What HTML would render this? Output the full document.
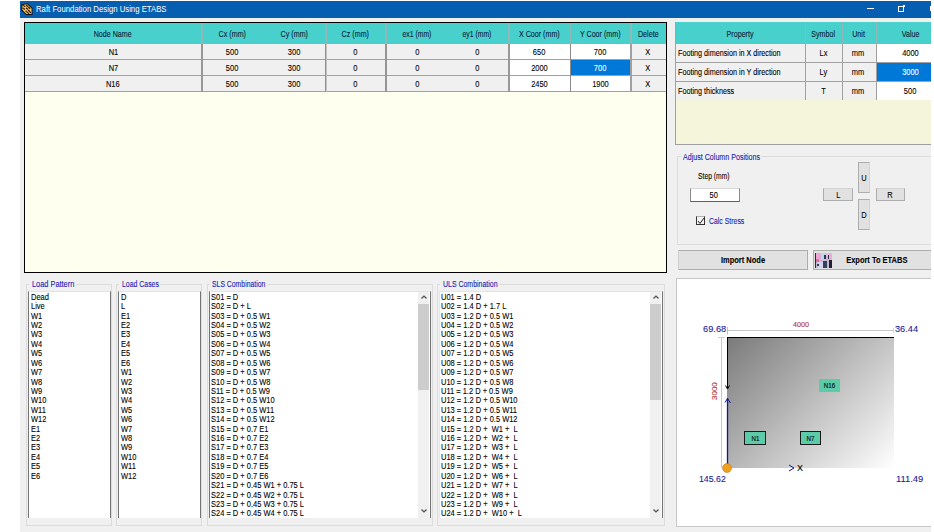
<!DOCTYPE html><html><head><meta charset="utf-8"><style>
*{margin:0;padding:0;box-sizing:border-box}
html,body{width:934px;height:532px;overflow:hidden;background:#fff;font-family:"Liberation Sans",sans-serif;font-size:8px;color:#000}
.ab{position:absolute}
.t{position:absolute;white-space:pre;line-height:1;-webkit-text-stroke:0.1px currentColor}
</style></head><body>
<div class="ab" style="left:20px;top:1px;width:911px;height:531px;background:#f0f0f0"></div><div class="ab" style="left:20px;top:1px;width:911px;height:16.5px;background:#065eb0"></div><svg class="ab" style="left:18px;top:0px" width="18" height="18" viewBox="18 0 18 18">
<polygon points="21.3,4.3 27.6,3.2 32.5,8 32.5,15 26,15 21.3,10.2" fill="#111"/>
<polygon points="22.3,5 27.2,4.2 31.6,8.4 31.6,14 26.4,14 22.3,9.8" fill="#ecc450"/>
<circle cx="23.1" cy="5.4" r="0.75" fill="#2a0a08"/><circle cx="24.6" cy="6.3" r="0.75" fill="#2a0a08"/><circle cx="26.6" cy="5.4" r="0.75" fill="#2a0a08"/><circle cx="27.6" cy="6.3" r="0.75" fill="#2a0a08"/><circle cx="28.8" cy="7.6" r="0.75" fill="#2a0a08"/><circle cx="29.7" cy="8.3" r="0.75" fill="#2a0a08"/><circle cx="23.1" cy="8.3" r="0.75" fill="#2a0a08"/><circle cx="24.3" cy="9.1" r="0.75" fill="#2a0a08"/><circle cx="26.5" cy="8.3" r="0.75" fill="#2a0a08"/><circle cx="27.5" cy="9.1" r="0.75" fill="#2a0a08"/><circle cx="28.7" cy="10.5" r="0.75" fill="#2a0a08"/><circle cx="29.5" cy="11.2" r="0.75" fill="#2a0a08"/><circle cx="26.3" cy="11.2" r="0.75" fill="#2a0a08"/><circle cx="27.3" cy="12.2" r="0.75" fill="#2a0a08"/><circle cx="30.5" cy="12.5" r="0.75" fill="#2a0a08"/><circle cx="28.5" cy="13.3" r="0.75" fill="#2a0a08"/>
</svg><div class="t" style="left:35.75px;top:5.00px;font-size:9px;color:#fff;transform:scaleX(0.862);transform-origin:0 50%;-webkit-text-stroke:0;">Raft Foundation Design Using ETABS</div><div class="ab" style="left:867px;top:8px;width:7px;height:1px;background:#fff"></div><div class="ab" style="left:898px;top:6px;width:6px;height:6px;border:1px solid #fff"></div><div class="ab" style="left:903px;top:5px;width:2px;height:2px;background:#fff"></div><div class="ab" style="left:930px;top:6px;width:1px;height:5px;background:#fff"></div><div class="ab" style="left:24px;top:22px;width:643px;height:251px;border:1px solid #000;background:#fffff0"></div><div class="ab" style="left:25px;top:23px;width:641px;height:21px;background:#48d1cc"></div><div class="ab" style="left:25px;top:44px;width:641px;height:15px;background:#f0f0f0"></div><div class="ab" style="left:25px;top:59px;width:641px;height:1px;background:#a0a0a0"></div><div class="ab" style="left:25px;top:60px;width:641px;height:15px;background:#f0f0f0"></div><div class="ab" style="left:25px;top:75px;width:641px;height:1px;background:#a0a0a0"></div><div class="ab" style="left:25px;top:76px;width:641px;height:15px;background:#f0f0f0"></div><div class="ab" style="left:25px;top:91px;width:641px;height:1px;background:#a0a0a0"></div><div class="ab" style="left:510px;top:44px;width:60px;height:15px;background:#fff"></div><div class="ab" style="left:571px;top:44px;width:59px;height:15px;background:#fff"></div><div class="ab" style="left:510px;top:60px;width:60px;height:15px;background:#fff"></div><div class="ab" style="left:571px;top:60px;width:59px;height:15px;background:#fff"></div><div class="ab" style="left:510px;top:76px;width:60px;height:15px;background:#fff"></div><div class="ab" style="left:571px;top:76px;width:59px;height:15px;background:#fff"></div><div class="ab" style="left:571px;top:60px;width:59px;height:15px;background:#0078d7"></div><div class="ab" style="left:201px;top:23px;width:2px;height:21px;background:#8fb9b7"></div><div class="ab" style="left:201px;top:44px;width:2px;height:48px;background:#989898"></div><div class="ab" style="left:325px;top:23px;width:1px;height:21px;background:#8fb9b7"></div><div class="ab" style="left:325px;top:44px;width:1px;height:48px;background:#909090"></div><div class="ab" style="left:326px;top:23px;width:1px;height:21px;background:#8fb9b7"></div><div class="ab" style="left:326px;top:44px;width:1px;height:48px;background:#c4c4c4"></div><div class="ab" style="left:385px;top:23px;width:2px;height:21px;background:#8fb9b7"></div><div class="ab" style="left:385px;top:44px;width:2px;height:48px;background:#959595"></div><div class="ab" style="left:508px;top:23px;width:2px;height:21px;background:#8fb9b7"></div><div class="ab" style="left:508px;top:44px;width:2px;height:48px;background:#999999"></div><div class="ab" style="left:570px;top:23px;width:1px;height:21px;background:#8fb9b7"></div><div class="ab" style="left:570px;top:44px;width:1px;height:48px;background:#8a8a8a"></div><div class="ab" style="left:630px;top:23px;width:2px;height:21px;background:#8fb9b7"></div><div class="ab" style="left:630px;top:44px;width:2px;height:48px;background:#a0a0a0"></div><div class="t" style="left:90.32px;top:30.25px;font-size:8.5px;color:#0a1a3a;transform:scaleX(0.838);transform-origin:50% 50%;">Node Name</div><div class="t" style="left:215.71px;top:30.25px;font-size:8.5px;color:#0a1a3a;transform:scaleX(0.840);transform-origin:50% 50%;">Cx (mm)</div><div class="t" style="left:277.71px;top:30.25px;font-size:8.5px;color:#0a1a3a;transform:scaleX(0.840);transform-origin:50% 50%;">Cy (mm)</div><div class="t" style="left:338.71px;top:30.25px;font-size:8.5px;color:#0a1a3a;transform:scaleX(0.840);transform-origin:50% 50%;">Cz (mm)</div><div class="t" style="left:399.05px;top:30.25px;font-size:8.5px;color:#0a1a3a;transform:scaleX(0.802);transform-origin:50% 50%;">ex1 (mm)</div><div class="t" style="left:459.05px;top:30.25px;font-size:8.5px;color:#0a1a3a;transform:scaleX(0.802);transform-origin:50% 50%;">ey1 (mm)</div><div class="t" style="left:514.68px;top:30.25px;font-size:8.5px;color:#0a1a3a;transform:scaleX(0.840);transform-origin:50% 50%;">X Coor (mm)</div><div class="t" style="left:575.75px;top:30.25px;font-size:8.5px;color:#0a1a3a;transform:scaleX(0.840);transform-origin:50% 50%;">Y Coor (mm)</div><div class="t" style="left:635.71px;top:30.25px;font-size:8.5px;color:#0a1a3a;transform:scaleX(0.840);transform-origin:50% 50%;">Delete</div><div class="t" style="left:107.56px;top:48.05px;font-size:8.5px;color:#000;transform:scaleX(0.880);transform-origin:50% 50%;">N1</div><div class="t" style="left:224.91px;top:48.05px;font-size:8.5px;color:#000;transform:scaleX(0.880);transform-origin:50% 50%;">500</div><div class="t" style="left:286.91px;top:48.05px;font-size:8.5px;color:#000;transform:scaleX(0.880);transform-origin:50% 50%;">300</div><div class="t" style="left:352.63px;top:48.05px;font-size:8.5px;color:#000;transform:scaleX(0.880);transform-origin:50% 50%;">0</div><div class="t" style="left:414.63px;top:48.05px;font-size:8.5px;color:#000;transform:scaleX(0.880);transform-origin:50% 50%;">0</div><div class="t" style="left:474.63px;top:48.05px;font-size:8.5px;color:#000;transform:scaleX(0.880);transform-origin:50% 50%;">0</div><div class="t" style="left:531.91px;top:48.05px;font-size:8.5px;color:#000;transform:scaleX(0.880);transform-origin:50% 50%;">650</div><div class="t" style="left:592.91px;top:48.05px;font-size:8.5px;color:#000;transform:scaleX(0.880);transform-origin:50% 50%;">700</div><div class="t" style="left:645.16px;top:48.05px;font-size:8.5px;color:#000;transform:scaleX(0.880);transform-origin:50% 50%;">X</div><div class="t" style="left:107.56px;top:64.05px;font-size:8.5px;color:#000;transform:scaleX(0.880);transform-origin:50% 50%;">N7</div><div class="t" style="left:224.91px;top:64.05px;font-size:8.5px;color:#000;transform:scaleX(0.880);transform-origin:50% 50%;">500</div><div class="t" style="left:286.91px;top:64.05px;font-size:8.5px;color:#000;transform:scaleX(0.880);transform-origin:50% 50%;">300</div><div class="t" style="left:352.63px;top:64.05px;font-size:8.5px;color:#000;transform:scaleX(0.880);transform-origin:50% 50%;">0</div><div class="t" style="left:414.63px;top:64.05px;font-size:8.5px;color:#000;transform:scaleX(0.880);transform-origin:50% 50%;">0</div><div class="t" style="left:474.63px;top:64.05px;font-size:8.5px;color:#000;transform:scaleX(0.880);transform-origin:50% 50%;">0</div><div class="t" style="left:529.54px;top:64.05px;font-size:8.5px;color:#000;transform:scaleX(0.880);transform-origin:50% 50%;">2000</div><div class="t" style="left:592.91px;top:64.05px;font-size:8.5px;color:#fff;transform:scaleX(0.880);transform-origin:50% 50%;">700</div><div class="t" style="left:645.16px;top:64.05px;font-size:8.5px;color:#000;transform:scaleX(0.880);transform-origin:50% 50%;">X</div><div class="t" style="left:105.20px;top:80.05px;font-size:8.5px;color:#000;transform:scaleX(0.880);transform-origin:50% 50%;">N16</div><div class="t" style="left:224.91px;top:80.05px;font-size:8.5px;color:#000;transform:scaleX(0.880);transform-origin:50% 50%;">500</div><div class="t" style="left:286.91px;top:80.05px;font-size:8.5px;color:#000;transform:scaleX(0.880);transform-origin:50% 50%;">300</div><div class="t" style="left:352.63px;top:80.05px;font-size:8.5px;color:#000;transform:scaleX(0.880);transform-origin:50% 50%;">0</div><div class="t" style="left:414.63px;top:80.05px;font-size:8.5px;color:#000;transform:scaleX(0.880);transform-origin:50% 50%;">0</div><div class="t" style="left:474.63px;top:80.05px;font-size:8.5px;color:#000;transform:scaleX(0.880);transform-origin:50% 50%;">0</div><div class="t" style="left:529.54px;top:80.05px;font-size:8.5px;color:#000;transform:scaleX(0.880);transform-origin:50% 50%;">2450</div><div class="t" style="left:590.54px;top:80.05px;font-size:8.5px;color:#000;transform:scaleX(0.880);transform-origin:50% 50%;">1900</div><div class="t" style="left:645.16px;top:80.05px;font-size:8.5px;color:#000;transform:scaleX(0.880);transform-origin:50% 50%;">X</div><div class="ab" style="left:675px;top:22px;width:256px;height:123px;background:#f5f5dc;border-left:1px solid #a0a0a0;border-bottom:1px solid #a0a0a0"></div><div class="ab" style="left:676px;top:22px;width:255px;height:22px;background:#48d1cc"></div><div class="ab" style="left:676px;top:44px;width:255px;height:18px;background:#f0f0f0"></div><div class="ab" style="left:877px;top:44px;width:54px;height:18px;background:#fff"></div><div class="ab" style="left:676px;top:63px;width:255px;height:18px;background:#f0f0f0"></div><div class="ab" style="left:877px;top:63px;width:54px;height:18px;background:#fff"></div><div class="ab" style="left:676px;top:82px;width:255px;height:18px;background:#f0f0f0"></div><div class="ab" style="left:877px;top:82px;width:54px;height:18px;background:#fff"></div><div class="ab" style="left:676px;top:62px;width:255px;height:1px;background:#a0a0a0"></div><div class="ab" style="left:676px;top:81px;width:255px;height:1px;background:#a0a0a0"></div><div class="ab" style="left:877px;top:63px;width:54px;height:18px;background:#0078d7"></div><div class="ab" style="left:805px;top:22px;width:1px;height:22px;background:#8fb9b7"></div><div class="ab" style="left:805px;top:44px;width:1px;height:56px;background:#a0a0a0"></div><div class="ab" style="left:842px;top:22px;width:1px;height:22px;background:#8fb9b7"></div><div class="ab" style="left:842px;top:44px;width:1px;height:56px;background:#a0a0a0"></div><div class="ab" style="left:876px;top:22px;width:1px;height:22px;background:#8fb9b7"></div><div class="ab" style="left:876px;top:44px;width:1px;height:56px;background:#a0a0a0"></div><div class="t" style="left:723.94px;top:29.75px;font-size:8.5px;color:#0a1a3a;transform:scaleX(0.840);transform-origin:50% 50%;">Property</div><div class="t" style="left:809.33px;top:29.75px;font-size:8.5px;color:#0a1a3a;transform:scaleX(0.840);transform-origin:50% 50%;">Symbol</div><div class="t" style="left:851.44px;top:29.75px;font-size:8.5px;color:#0a1a3a;transform:scaleX(0.840);transform-origin:50% 50%;">Unit</div><div class="t" style="left:899.95px;top:29.75px;font-size:8.5px;color:#0a1a3a;transform:scaleX(0.840);transform-origin:50% 50%;">Value</div><div class="t" style="left:677.50px;top:49.05px;font-size:8.5px;color:#000;transform:scaleX(0.848);transform-origin:0 50%;">Footing dimension in X direction</div><div class="t" style="left:819.01px;top:49.05px;font-size:8.5px;color:#000;transform:scaleX(0.880);transform-origin:50% 50%;">Lx</div><div class="t" style="left:851.41px;top:49.05px;font-size:8.5px;color:#000;transform:scaleX(0.880);transform-origin:50% 50%;">mm</div><div class="t" style="left:901.04px;top:49.05px;font-size:8.5px;color:#000;transform:scaleX(0.880);transform-origin:50% 50%;">4000</div><div class="t" style="left:677.50px;top:68.05px;font-size:8.5px;color:#000;transform:scaleX(0.850);transform-origin:0 50%;">Footing dimension in Y direction</div><div class="t" style="left:819.16px;top:68.05px;font-size:8.5px;color:#000;transform:scaleX(0.880);transform-origin:50% 50%;">Ly</div><div class="t" style="left:851.41px;top:68.05px;font-size:8.5px;color:#000;transform:scaleX(0.880);transform-origin:50% 50%;">mm</div><div class="t" style="left:901.04px;top:68.05px;font-size:8.5px;color:#fff;transform:scaleX(0.880);transform-origin:50% 50%;">3000</div><div class="t" style="left:677.50px;top:87.05px;font-size:8.5px;color:#000;transform:scaleX(0.850);transform-origin:0 50%;">Footing thickness</div><div class="t" style="left:820.90px;top:87.05px;font-size:8.5px;color:#000;transform:scaleX(0.880);transform-origin:50% 50%;">T</div><div class="t" style="left:851.41px;top:87.05px;font-size:8.5px;color:#000;transform:scaleX(0.880);transform-origin:50% 50%;">mm</div><div class="t" style="left:903.41px;top:87.05px;font-size:8.5px;color:#000;transform:scaleX(0.880);transform-origin:50% 50%;">500</div><div class="ab" style="left:677px;top:156px;width:260px;height:89px;border:1px solid #dcdcdc"></div><div class="ab" style="left:681px;top:151px;width:80px;height:10px;background:#f0f0f0"></div><div class="t" style="left:683.00px;top:153.05px;font-size:8.5px;color:#1a1ab0;transform:scaleX(0.836);transform-origin:0 50%;">Adjust Column Positions</div><div class="t" style="left:697.50px;top:172.05px;font-size:8.5px;color:#000;transform:scaleX(0.794);transform-origin:0 50%;">Step (mm)</div><div class="ab" style="left:690px;top:188px;width:50px;height:14px;background:#fff;border:1px solid #8a8a8a;border-top-color:#d8d8d8;border-bottom-color:#606060"></div><div class="t" style="left:709.27px;top:190.75px;font-size:8.5px;color:#000;transform:scaleX(0.880);transform-origin:50% 50%;">50</div><div class="ab" style="left:696px;top:216px;width:9px;height:9px;border:1px solid #333;border-top-color:#b0b0b0;background:#f4f4f4"></div><svg class="ab" style="left:697px;top:217px" width="8" height="8"><path d="M1 4 L3 6.5 L7 1" stroke="#222" stroke-width="1" fill="none"/></svg><div class="t" style="left:709.00px;top:216.75px;font-size:8.5px;color:#1a1ab0;transform:scaleX(0.812);transform-origin:0 50%;">Calc Stress</div><div class="ab" style="left:858px;top:162px;width:12px;height:31px;background:#e1e1e1;border:1px solid #adadad;border-right-color:#d4d4d4"></div><div class="t" style="left:860.93px;top:174.05px;font-size:8.5px;color:#000;transform:scaleX(0.880);transform-origin:50% 50%;">U</div><div class="ab" style="left:823px;top:188px;width:30px;height:13px;background:#e1e1e1;border:1px solid #adadad;border-top-color:#d4d4d4"></div><div class="t" style="left:835.63px;top:191.05px;font-size:8.5px;color:#000;transform:scaleX(0.880);transform-origin:50% 50%;">L</div><div class="ab" style="left:876px;top:188px;width:29px;height:13px;background:#e1e1e1;border:1px solid #adadad;border-top-color:#d4d4d4"></div><div class="t" style="left:887.43px;top:191.05px;font-size:8.5px;color:#000;transform:scaleX(0.880);transform-origin:50% 50%;">R</div><div class="ab" style="left:858px;top:199px;width:12px;height:31px;background:#e1e1e1;border:1px solid #adadad;border-right-color:#d4d4d4"></div><div class="t" style="left:860.93px;top:211.05px;font-size:8.5px;color:#000;transform:scaleX(0.880);transform-origin:50% 50%;">D</div><div class="ab" style="left:678px;top:250px;width:130px;height:20px;background:#e1e1e1;border:1px solid #adadad;border-left-color:#d0d0d0"></div><div class="t" style="left:717.97px;top:255.75px;font-size:8.5px;color:#000;font-weight:bold;transform:scaleX(0.880);transform-origin:50% 50%;">Import Node</div><div class="ab" style="left:813px;top:250px;width:125px;height:20px;background:#e1e1e1;border:1px solid #adadad"></div><svg class="ab" style="left:815px;top:253px" width="17" height="15" viewBox="0 0 17 15" shape-rendering="crispEdges">
<rect x="0" y="0" width="17" height="15" fill="#c8b8d8"/>
<rect x="1" y="0" width="5" height="8" fill="#e8a8d8"/>
<rect x="1" y="6" width="3" height="3" fill="#e07090"/>
<rect x="6" y="0" width="4" height="7" fill="#b8d8e8"/>
<rect x="10" y="0" width="4" height="3" fill="#e8b8e0"/>
<rect x="9" y="2" width="2" height="4" fill="#303050"/>
<rect x="13" y="2" width="1" height="4" fill="#303040"/>
<rect x="14" y="0" width="3" height="7" fill="#e8b0d8"/>
<rect x="3" y="9" width="5" height="6" fill="#d0d8f0"/>
<rect x="8" y="8" width="4" height="7" fill="#384058"/>
<rect x="12" y="9" width="2" height="6" fill="#c0b8d8"/>
<rect x="14" y="7" width="3" height="8" fill="#202030"/>
<rect x="2" y="11" width="2" height="2" fill="#304050"/>
<rect x="0" y="0" width="1" height="15" fill="#302830"/>
</svg><div class="t" style="left:842.21px;top:255.75px;font-size:8.5px;color:#000;font-weight:bold;transform:scaleX(0.880);transform-origin:50% 50%;">Export To ETABS</div><div class="ab" style="left:676px;top:278px;width:256px;height:249px;background:#fff;border:1px solid #c8c8c8;border-right:none"></div><svg class="ab" style="left:676px;top:278px" width="255" height="249">
<defs><linearGradient id="g" gradientUnits="userSpaceOnUse" x1="51" y1="59" x2="200" y2="208"><stop offset="0" stop-color="#7a7a7a"/><stop offset="1" stop-color="#ffffff"/></linearGradient></defs>
<rect x="51" y="59" width="167" height="131" fill="url(#g)"/>
<line x1="51" y1="59.5" x2="218" y2="59.5" stroke="#000" stroke-width="1.2"/>
<line x1="51.5" y1="59" x2="51.5" y2="110" stroke="#000" stroke-width="1"/>
<line x1="51" y1="52.5" x2="218" y2="52.5" stroke="#c8c8c8" stroke-width="1"/><line x1="51.5" y1="49" x2="51.5" y2="56.5" stroke="#c0c0c0" stroke-width="1"/><line x1="217.5" y1="50" x2="217.5" y2="55" stroke="#d8d8d8" stroke-width="1"/><line x1="42" y1="59.5" x2="49" y2="59.5" stroke="#d0d0d0" stroke-width="1"/>
<line x1="45.5" y1="59" x2="45.5" y2="190" stroke="#c8c8c8" stroke-width="1"/>
<line x1="51.5" y1="120" x2="51.5" y2="190" stroke="#14149a" stroke-width="1.3"/>
<path d="M49 124.5 L51.5 120.5 L54.5 125" stroke="#14149a" stroke-width="1" fill="none"/>
<path d="M49.5 107.5 L51.5 111 L53.5 107.5" stroke="#000" stroke-width="1" fill="none"/>
<path d="M113 187 L118 190 L113 193" stroke="#14149a" stroke-width="1" fill="none"/>
<circle cx="51" cy="190" r="4.5" fill="#f0a020" stroke="#b07010" stroke-width="0.5"/>
</svg><div class="t" style="left:702.50px;top:323.95px;font-size:9.5px;color:#1a1a9a;transform:scaleX(0.976);transform-origin:0 50%;">69.68</div><div class="t" style="left:895.00px;top:323.95px;font-size:9.5px;color:#1a1a9a;transform:scaleX(0.967);transform-origin:0 50%;">36.44</div><div class="t" style="left:698.60px;top:474.25px;font-size:9.5px;color:#1a1a9a;transform:scaleX(0.922);transform-origin:0 50%;">145.62</div><div class="t" style="left:896.00px;top:474.25px;font-size:9.5px;color:#1a1a9a;transform:scaleX(0.987);transform-origin:0 50%;">111.49</div><div class="t" style="left:792.90px;top:320.80px;font-size:8px;color:#b03030;transform:scaleX(0.899);transform-origin:0 50%;">4000</div><div class="t" style="left:707px;top:387.5px;font-size:8px;color:#b03030;transform:rotate(-90deg);transform-origin:8px 4px">3000</div><div class="t" style="left:797.00px;top:463.50px;font-size:9px;color:#000;">X</div><div class="ab" style="left:819px;top:379px;width:21px;height:13px;background:#5ccba8;"></div><div class="t" style="left:823.08px;top:382.00px;font-size:7px;color:#0a1a1a;transform:scaleX(0.880);transform-origin:50% 50%;-webkit-text-stroke:0.2px #0a1a1a;">N16</div><div class="ab" style="left:744px;top:431px;width:22px;height:14px;background:#5ccba8;border:1px solid #1a1a1a"></div><div class="t" style="left:750.52px;top:434.50px;font-size:7px;color:#0a1a1a;transform:scaleX(0.880);transform-origin:50% 50%;-webkit-text-stroke:0.2px #0a1a1a;">N1</div><div class="ab" style="left:800px;top:431px;width:21px;height:14px;background:#5ccba8;border:1px solid #1a1a1a"></div><div class="t" style="left:806.02px;top:434.50px;font-size:7px;color:#0a1a1a;transform:scaleX(0.880);transform-origin:50% 50%;-webkit-text-stroke:0.2px #0a1a1a;">N7</div><div class="ab" style="left:26px;top:284px;width:86px;height:242px;border:1px solid #dcdcdc"></div><div class="ab" style="left:28px;top:291px;width:83px;height:227px;background:#fff;border-left:1px solid #747474;border-right:1px solid #747474;border-top:1px solid #e3e3e3"></div><div class="ab" style="left:29px;top:280px;width:46.599999999999994px;height:8px;background:#f0f0f0"></div><div class="t" style="left:31.80px;top:280.15px;font-size:8.5px;color:#1a1ab0;transform:scaleX(0.869);transform-origin:0 50%;">Load Pattern</div><div class="t" style="left:30.60px;top:292.75px;font-size:8.5px;color:#000;transform:scaleX(0.880);transform-origin:0 50%;">Dead</div><div class="t" style="left:30.60px;top:302.17px;font-size:8.5px;color:#000;transform:scaleX(0.880);transform-origin:0 50%;">Live</div><div class="t" style="left:30.60px;top:311.59px;font-size:8.5px;color:#000;transform:scaleX(0.880);transform-origin:0 50%;">W1</div><div class="t" style="left:30.60px;top:321.01px;font-size:8.5px;color:#000;transform:scaleX(0.880);transform-origin:0 50%;">W2</div><div class="t" style="left:30.60px;top:330.43px;font-size:8.5px;color:#000;transform:scaleX(0.880);transform-origin:0 50%;">W3</div><div class="t" style="left:30.60px;top:339.85px;font-size:8.5px;color:#000;transform:scaleX(0.880);transform-origin:0 50%;">W4</div><div class="t" style="left:30.60px;top:349.27px;font-size:8.5px;color:#000;transform:scaleX(0.880);transform-origin:0 50%;">W5</div><div class="t" style="left:30.60px;top:358.69px;font-size:8.5px;color:#000;transform:scaleX(0.880);transform-origin:0 50%;">W6</div><div class="t" style="left:30.60px;top:368.11px;font-size:8.5px;color:#000;transform:scaleX(0.880);transform-origin:0 50%;">W7</div><div class="t" style="left:30.60px;top:377.53px;font-size:8.5px;color:#000;transform:scaleX(0.880);transform-origin:0 50%;">W8</div><div class="t" style="left:30.60px;top:386.95px;font-size:8.5px;color:#000;transform:scaleX(0.880);transform-origin:0 50%;">W9</div><div class="t" style="left:30.60px;top:396.37px;font-size:8.5px;color:#000;transform:scaleX(0.880);transform-origin:0 50%;">W10</div><div class="t" style="left:30.60px;top:405.79px;font-size:8.5px;color:#000;transform:scaleX(0.880);transform-origin:0 50%;">W11</div><div class="t" style="left:30.60px;top:415.21px;font-size:8.5px;color:#000;transform:scaleX(0.880);transform-origin:0 50%;">W12</div><div class="t" style="left:30.60px;top:424.63px;font-size:8.5px;color:#000;transform:scaleX(0.880);transform-origin:0 50%;">E1</div><div class="t" style="left:30.60px;top:434.05px;font-size:8.5px;color:#000;transform:scaleX(0.880);transform-origin:0 50%;">E2</div><div class="t" style="left:30.60px;top:443.47px;font-size:8.5px;color:#000;transform:scaleX(0.880);transform-origin:0 50%;">E3</div><div class="t" style="left:30.60px;top:452.89px;font-size:8.5px;color:#000;transform:scaleX(0.880);transform-origin:0 50%;">E4</div><div class="t" style="left:30.60px;top:462.31px;font-size:8.5px;color:#000;transform:scaleX(0.880);transform-origin:0 50%;">E5</div><div class="t" style="left:30.60px;top:471.73px;font-size:8.5px;color:#000;transform:scaleX(0.880);transform-origin:0 50%;">E6</div><div class="ab" style="left:116px;top:284px;width:86px;height:242px;border:1px solid #dcdcdc"></div><div class="ab" style="left:118px;top:291px;width:83px;height:227px;background:#fff;border-left:1px solid #747474;border-right:1px solid #747474;border-top:1px solid #e3e3e3"></div><div class="ab" style="left:119px;top:280px;width:41.0px;height:8px;background:#f0f0f0"></div><div class="t" style="left:121.60px;top:280.15px;font-size:8.5px;color:#1a1ab0;transform:scaleX(0.813);transform-origin:0 50%;">Load Cases</div><div class="t" style="left:120.70px;top:292.75px;font-size:8.5px;color:#000;transform:scaleX(0.880);transform-origin:0 50%;">D</div><div class="t" style="left:120.70px;top:302.17px;font-size:8.5px;color:#000;transform:scaleX(0.880);transform-origin:0 50%;">L</div><div class="t" style="left:120.70px;top:311.59px;font-size:8.5px;color:#000;transform:scaleX(0.880);transform-origin:0 50%;">E1</div><div class="t" style="left:120.70px;top:321.01px;font-size:8.5px;color:#000;transform:scaleX(0.880);transform-origin:0 50%;">E2</div><div class="t" style="left:120.70px;top:330.43px;font-size:8.5px;color:#000;transform:scaleX(0.880);transform-origin:0 50%;">E3</div><div class="t" style="left:120.70px;top:339.85px;font-size:8.5px;color:#000;transform:scaleX(0.880);transform-origin:0 50%;">E4</div><div class="t" style="left:120.70px;top:349.27px;font-size:8.5px;color:#000;transform:scaleX(0.880);transform-origin:0 50%;">E5</div><div class="t" style="left:120.70px;top:358.69px;font-size:8.5px;color:#000;transform:scaleX(0.880);transform-origin:0 50%;">E6</div><div class="t" style="left:120.70px;top:368.11px;font-size:8.5px;color:#000;transform:scaleX(0.880);transform-origin:0 50%;">W1</div><div class="t" style="left:120.70px;top:377.53px;font-size:8.5px;color:#000;transform:scaleX(0.880);transform-origin:0 50%;">W2</div><div class="t" style="left:120.70px;top:386.95px;font-size:8.5px;color:#000;transform:scaleX(0.880);transform-origin:0 50%;">W3</div><div class="t" style="left:120.70px;top:396.37px;font-size:8.5px;color:#000;transform:scaleX(0.880);transform-origin:0 50%;">W4</div><div class="t" style="left:120.70px;top:405.79px;font-size:8.5px;color:#000;transform:scaleX(0.880);transform-origin:0 50%;">W5</div><div class="t" style="left:120.70px;top:415.21px;font-size:8.5px;color:#000;transform:scaleX(0.880);transform-origin:0 50%;">W6</div><div class="t" style="left:120.70px;top:424.63px;font-size:8.5px;color:#000;transform:scaleX(0.880);transform-origin:0 50%;">W7</div><div class="t" style="left:120.70px;top:434.05px;font-size:8.5px;color:#000;transform:scaleX(0.880);transform-origin:0 50%;">W8</div><div class="t" style="left:120.70px;top:443.47px;font-size:8.5px;color:#000;transform:scaleX(0.880);transform-origin:0 50%;">W9</div><div class="t" style="left:120.70px;top:452.89px;font-size:8.5px;color:#000;transform:scaleX(0.880);transform-origin:0 50%;">W10</div><div class="t" style="left:120.70px;top:462.31px;font-size:8.5px;color:#000;transform:scaleX(0.880);transform-origin:0 50%;">W11</div><div class="t" style="left:120.70px;top:471.73px;font-size:8.5px;color:#000;transform:scaleX(0.880);transform-origin:0 50%;">W12</div><div class="ab" style="left:207px;top:284px;width:226px;height:242px;border:1px solid #dcdcdc"></div><div class="ab" style="left:209px;top:291px;width:222px;height:227px;background:#fff;border-left:1px solid #747474;border-right:1px solid #747474;border-top:1px solid #e3e3e3"></div><div class="ab" style="left:210px;top:280px;width:56.5px;height:8px;background:#f0f0f0"></div><div class="t" style="left:211.70px;top:280.15px;font-size:8.5px;color:#1a1ab0;transform:scaleX(0.806);transform-origin:0 50%;">SLS Combination</div><div class="t" style="left:210.60px;top:292.75px;font-size:8.5px;color:#000;transform:scaleX(0.880);transform-origin:0 50%;">S01 = D</div><div class="t" style="left:210.60px;top:302.17px;font-size:8.5px;color:#000;transform:scaleX(0.880);transform-origin:0 50%;">S02 = D + L</div><div class="t" style="left:210.60px;top:311.59px;font-size:8.5px;color:#000;transform:scaleX(0.880);transform-origin:0 50%;">S03 = D + 0.5 W1</div><div class="t" style="left:210.60px;top:321.01px;font-size:8.5px;color:#000;transform:scaleX(0.880);transform-origin:0 50%;">S04 = D + 0.5 W2</div><div class="t" style="left:210.60px;top:330.43px;font-size:8.5px;color:#000;transform:scaleX(0.880);transform-origin:0 50%;">S05 = D + 0.5 W3</div><div class="t" style="left:210.60px;top:339.85px;font-size:8.5px;color:#000;transform:scaleX(0.880);transform-origin:0 50%;">S06 = D + 0.5 W4</div><div class="t" style="left:210.60px;top:349.27px;font-size:8.5px;color:#000;transform:scaleX(0.880);transform-origin:0 50%;">S07 = D + 0.5 W5</div><div class="t" style="left:210.60px;top:358.69px;font-size:8.5px;color:#000;transform:scaleX(0.880);transform-origin:0 50%;">S08 = D + 0.5 W6</div><div class="t" style="left:210.60px;top:368.11px;font-size:8.5px;color:#000;transform:scaleX(0.880);transform-origin:0 50%;">S09 = D + 0.5 W7</div><div class="t" style="left:210.60px;top:377.53px;font-size:8.5px;color:#000;transform:scaleX(0.880);transform-origin:0 50%;">S10 = D + 0.5 W8</div><div class="t" style="left:210.60px;top:386.95px;font-size:8.5px;color:#000;transform:scaleX(0.880);transform-origin:0 50%;">S11 = D + 0.5 W9</div><div class="t" style="left:210.60px;top:396.37px;font-size:8.5px;color:#000;transform:scaleX(0.880);transform-origin:0 50%;">S12 = D + 0.5 W10</div><div class="t" style="left:210.60px;top:405.79px;font-size:8.5px;color:#000;transform:scaleX(0.880);transform-origin:0 50%;">S13 = D + 0.5 W11</div><div class="t" style="left:210.60px;top:415.21px;font-size:8.5px;color:#000;transform:scaleX(0.880);transform-origin:0 50%;">S14 = D + 0.5 W12</div><div class="t" style="left:210.60px;top:424.63px;font-size:8.5px;color:#000;transform:scaleX(0.880);transform-origin:0 50%;">S15 = D + 0.7 E1</div><div class="t" style="left:210.60px;top:434.05px;font-size:8.5px;color:#000;transform:scaleX(0.880);transform-origin:0 50%;">S16 = D + 0.7 E2</div><div class="t" style="left:210.60px;top:443.47px;font-size:8.5px;color:#000;transform:scaleX(0.880);transform-origin:0 50%;">S17 = D + 0.7 E3</div><div class="t" style="left:210.60px;top:452.89px;font-size:8.5px;color:#000;transform:scaleX(0.880);transform-origin:0 50%;">S18 = D + 0.7 E4</div><div class="t" style="left:210.60px;top:462.31px;font-size:8.5px;color:#000;transform:scaleX(0.880);transform-origin:0 50%;">S19 = D + 0.7 E5</div><div class="t" style="left:210.60px;top:471.73px;font-size:8.5px;color:#000;transform:scaleX(0.880);transform-origin:0 50%;">S20 = D + 0.7 E6</div><div class="t" style="left:210.60px;top:481.15px;font-size:8.5px;color:#000;transform:scaleX(0.880);transform-origin:0 50%;">S21 = D + 0.45 W1 + 0.75 L</div><div class="t" style="left:210.60px;top:490.57px;font-size:8.5px;color:#000;transform:scaleX(0.880);transform-origin:0 50%;">S22 = D + 0.45 W2 + 0.75 L</div><div class="t" style="left:210.60px;top:499.99px;font-size:8.5px;color:#000;transform:scaleX(0.880);transform-origin:0 50%;">S23 = D + 0.45 W3 + 0.75 L</div><div class="t" style="left:210.60px;top:509.41px;font-size:8.5px;color:#000;transform:scaleX(0.880);transform-origin:0 50%;">S24 = D + 0.45 W4 + 0.75 L</div><div class="ab" style="left:418px;top:292px;width:11px;height:226px;background:#f0f0f0"></div><div class="ab" style="left:418px;top:304px;width:11px;height:86px;background:#cdcdcd"></div><svg class="ab" style="left:420px;top:294px" width="8" height="6"><path d="M1.5 4.5 L4 2 L6.5 4.5" stroke="#505050" stroke-width="1.2" fill="none"/></svg><svg class="ab" style="left:420px;top:508px" width="8" height="6"><path d="M1.5 1.5 L4 4 L6.5 1.5" stroke="#505050" stroke-width="1.2" fill="none"/></svg><div class="ab" style="left:437px;top:284px;width:228px;height:242px;border:1px solid #dcdcdc"></div><div class="ab" style="left:439px;top:291px;width:224px;height:227px;background:#fff;border-left:1px solid #e8e8e8;border-right:1px solid #747474;border-top:1px solid #e3e3e3"></div><div class="ab" style="left:440px;top:280px;width:58.80000000000001px;height:8px;background:#f0f0f0"></div><div class="t" style="left:442.80px;top:280.15px;font-size:8.5px;color:#1a1ab0;transform:scaleX(0.818);transform-origin:0 50%;">ULS Combination</div><div class="t" style="left:441.00px;top:292.75px;font-size:8.5px;color:#000;transform:scaleX(0.880);transform-origin:0 50%;">U01 = 1.4 D</div><div class="t" style="left:441.00px;top:302.17px;font-size:8.5px;color:#000;transform:scaleX(0.880);transform-origin:0 50%;">U02 = 1.4 D + 1.7 L</div><div class="t" style="left:441.00px;top:311.59px;font-size:8.5px;color:#000;transform:scaleX(0.880);transform-origin:0 50%;">U03 = 1.2 D + 0.5 W1</div><div class="t" style="left:441.00px;top:321.01px;font-size:8.5px;color:#000;transform:scaleX(0.880);transform-origin:0 50%;">U04 = 1.2 D + 0.5 W2</div><div class="t" style="left:441.00px;top:330.43px;font-size:8.5px;color:#000;transform:scaleX(0.880);transform-origin:0 50%;">U05 = 1.2 D + 0.5 W3</div><div class="t" style="left:441.00px;top:339.85px;font-size:8.5px;color:#000;transform:scaleX(0.880);transform-origin:0 50%;">U06 = 1.2 D + 0.5 W4</div><div class="t" style="left:441.00px;top:349.27px;font-size:8.5px;color:#000;transform:scaleX(0.880);transform-origin:0 50%;">U07 = 1.2 D + 0.5 W5</div><div class="t" style="left:441.00px;top:358.69px;font-size:8.5px;color:#000;transform:scaleX(0.880);transform-origin:0 50%;">U08 = 1.2 D + 0.5 W6</div><div class="t" style="left:441.00px;top:368.11px;font-size:8.5px;color:#000;transform:scaleX(0.880);transform-origin:0 50%;">U09 = 1.2 D + 0.5 W7</div><div class="t" style="left:441.00px;top:377.53px;font-size:8.5px;color:#000;transform:scaleX(0.880);transform-origin:0 50%;">U10 = 1.2 D + 0.5 W8</div><div class="t" style="left:441.00px;top:386.95px;font-size:8.5px;color:#000;transform:scaleX(0.880);transform-origin:0 50%;">U11 = 1.2 D + 0.5 W9</div><div class="t" style="left:441.00px;top:396.37px;font-size:8.5px;color:#000;transform:scaleX(0.880);transform-origin:0 50%;">U12 = 1.2 D + 0.5 W10</div><div class="t" style="left:441.00px;top:405.79px;font-size:8.5px;color:#000;transform:scaleX(0.880);transform-origin:0 50%;">U13 = 1.2 D + 0.5 W11</div><div class="t" style="left:441.00px;top:415.21px;font-size:8.5px;color:#000;transform:scaleX(0.880);transform-origin:0 50%;">U14 = 1.2 D + 0.5 W12</div><div class="t" style="left:441.00px;top:424.63px;font-size:8.5px;color:#000;transform:scaleX(0.880);transform-origin:0 50%;">U15 = 1.2 D +  W1 +  L</div><div class="t" style="left:441.00px;top:434.05px;font-size:8.5px;color:#000;transform:scaleX(0.880);transform-origin:0 50%;">U16 = 1.2 D +  W2 +  L</div><div class="t" style="left:441.00px;top:443.47px;font-size:8.5px;color:#000;transform:scaleX(0.880);transform-origin:0 50%;">U17 = 1.2 D +  W3 +  L</div><div class="t" style="left:441.00px;top:452.89px;font-size:8.5px;color:#000;transform:scaleX(0.880);transform-origin:0 50%;">U18 = 1.2 D +  W4 +  L</div><div class="t" style="left:441.00px;top:462.31px;font-size:8.5px;color:#000;transform:scaleX(0.880);transform-origin:0 50%;">U19 = 1.2 D +  W5 +  L</div><div class="t" style="left:441.00px;top:471.73px;font-size:8.5px;color:#000;transform:scaleX(0.880);transform-origin:0 50%;">U20 = 1.2 D +  W6 +  L</div><div class="t" style="left:441.00px;top:481.15px;font-size:8.5px;color:#000;transform:scaleX(0.880);transform-origin:0 50%;">U21 = 1.2 D +  W7 +  L</div><div class="t" style="left:441.00px;top:490.57px;font-size:8.5px;color:#000;transform:scaleX(0.880);transform-origin:0 50%;">U22 = 1.2 D +  W8 +  L</div><div class="t" style="left:441.00px;top:499.99px;font-size:8.5px;color:#000;transform:scaleX(0.880);transform-origin:0 50%;">U23 = 1.2 D +  W9 +  L</div><div class="t" style="left:441.00px;top:509.41px;font-size:8.5px;color:#000;transform:scaleX(0.880);transform-origin:0 50%;">U24 = 1.2 D +  W10 +  L</div><div class="ab" style="left:650px;top:292px;width:11px;height:226px;background:#f0f0f0"></div><div class="ab" style="left:650px;top:304px;width:11px;height:96px;background:#cdcdcd"></div><svg class="ab" style="left:652px;top:294px" width="8" height="6"><path d="M1.5 4.5 L4 2 L6.5 4.5" stroke="#505050" stroke-width="1.2" fill="none"/></svg><svg class="ab" style="left:652px;top:508px" width="8" height="6"><path d="M1.5 1.5 L4 4 L6.5 1.5" stroke="#505050" stroke-width="1.2" fill="none"/></svg><div class="ab" style="left:931px;top:0px;width:3px;height:532px;background:#fff"></div></body></html>
